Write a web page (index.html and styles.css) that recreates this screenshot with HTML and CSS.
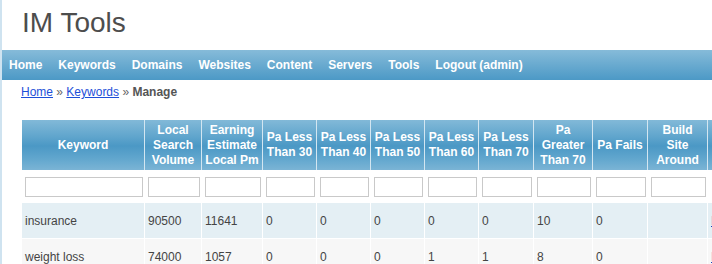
FILE: index.html
```html
<!DOCTYPE html>
<html lang="en">

<head>
    <meta charset="UTF-8">
    <meta name="viewport" content="width=device-width, initial-scale=1.0">
    <title>IM Tools</title>
    <link rel="stylesheet" href="styles.css">
</head>

<body>
    <div id="header">
        <h1>IM Tools</h1>
    </div>

    <ul id="mainmenu">
        <li><a href="#">Home</a></li>
        <li><a href="#">Keywords</a></li>
        <li><a href="#">Domains</a></li>
        <li><a href="#">Websites</a></li>
        <li><a href="#">Content</a></li>
        <li><a href="#">Servers</a></li>
        <li><a href="#">Tools</a></li>
        <li><a href="#">Logout (admin)</a></li>
    </ul>

    <div class="breadcrumbs">
        <a href="#">Home</a> &raquo; <a href="#">Keywords</a> &raquo; <span>Manage</span>
    </div>

    <div class="grid-view">
        <table class="items">
            <thead>
                <tr>
                    <th style="width:123px">Keyword</th>
                    <th style="width:57px">Local Search Volume</th>
                    <th style="width:61px">Earning Estimate Local Pm</th>
                    <th style="width:54px">Pa Less Than 30</th>
                    <th style="width:54px">Pa Less Than 40</th>
                    <th style="width:54px">Pa Less Than 50</th>
                    <th style="width:54px">Pa Less Than 60</th>
                    <th style="width:55px">Pa Less Than 70</th>
                    <th style="width:59px">Pa Greater Than 70</th>
                    <th style="width:55px">Pa Fails</th>
                    <th class="wide-pad" style="width:60px">Build Site Around</th>
                    <th style="width:60px">Actions</th>
                </tr>
                <tr class="filters">
                    <td><input type="text"></td>
                    <td><input type="text"></td>
                    <td><input type="text"></td>
                    <td><input type="text"></td>
                    <td><input type="text"></td>
                    <td><input type="text"></td>
                    <td><input type="text"></td>
                    <td><input type="text"></td>
                    <td><input type="text"></td>
                    <td><input type="text"></td>
                    <td><input type="text"></td>
                    <td></td>
                </tr>
            </thead>
            <tbody>
                <tr class="odd">
                    <td>insurance</td>
                    <td>90500</td>
                    <td>11641</td>
                    <td>0</td>
                    <td>0</td>
                    <td>0</td>
                    <td>0</td>
                    <td>0</td>
                    <td>10</td>
                    <td>0</td>
                    <td></td>
                    <td><a href="#">Edit</a></td>
                </tr>
                <tr class="even">
                    <td>weight loss</td>
                    <td>74000</td>
                    <td>1057</td>
                    <td>0</td>
                    <td>0</td>
                    <td>0</td>
                    <td>1</td>
                    <td>1</td>
                    <td>8</td>
                    <td>0</td>
                    <td></td>
                    <td><a href="#">Edit</a></td>
                </tr>
            </tbody>
        </table>
    </div>
</body>

</html>
```

FILE: styles.css
```css
body {
    margin: 0;
    min-height: 100vh;
    border-left: 2px solid #cfe3f0;
    font-family: "Liberation Sans", Arial, sans-serif;
    font-size: 12px;
    color: #444;
    overflow: hidden;
}

#header {
    padding: 7px 0 11px 20px;
}

#header h1 {
    margin: 0;
    font-size: 28px;
    font-weight: normal;
    line-height: 32px;
    color: #4d4d4d;
}

#mainmenu {
    display: flex;
    gap: 16px;
    list-style: none;
    margin: 0;
    padding: 0 0 0 7px;
    height: 30px;
    background: linear-gradient(#86bbd9, #4c99c6);
}

#mainmenu a {
    display: block;
    line-height: 31px;
    font-size: 12px;
    font-weight: bold;
    color: #fff;
    text-decoration: none;
}

.breadcrumbs {
    margin: 5px 0 0 19px;
    line-height: 15px;
    font-size: 12px;
    color: #666;
}

.breadcrumbs a {
    color: #1d4fd8;
}

.breadcrumbs span {
    font-weight: bold;
    color: #555;
}

.grid-view {
    margin: 20px 0 0 20px;
    overflow: hidden;
}

.items {
    table-layout: fixed;
    width: 746px;
    border-collapse: separate;
    border-spacing: 0;
}

.items th,
.items td {
    box-sizing: border-box;
    border-right: 1px solid #fff;
}

.items th {
    height: 50px;
    padding: 0 2px;
    border-right-color: #d3e6f1;
    background: linear-gradient(#82b9d8 0%, #5ea4cc 35%, #4b98c5 52%, #62a7ce 78%, #7bb4d5 100%);
    color: #fff;
    font-size: 12px;
    font-weight: bold;
    line-height: 15px;
    text-align: center;
    vertical-align: middle;
}

.items th.wide-pad {
    padding: 0 7px;
}

.items .filters td {
    padding: 7px 1px 5px 3px;
    border-bottom: 1px solid #fff;
    background-color: #fff;
}

.items .filters input {
    display: block;
    box-sizing: border-box;
    width: 100%;
    height: 20px;
    margin: 0;
    border: 1px solid #c9c9c9;
    padding: 0 2px;
}

.items tbody td {
    height: 36px;
    padding: 0 3px;
    border-bottom: 1px solid #fff;
    font-size: 12px;
    color: #444;
    vertical-align: middle;
}

.items tr.odd td {
    background-color: #e4eff4;
}

.items tr.even td {
    background-color: #f7f7f7;
}

.items tbody a {
    color: #1d3fb8;
}
```
